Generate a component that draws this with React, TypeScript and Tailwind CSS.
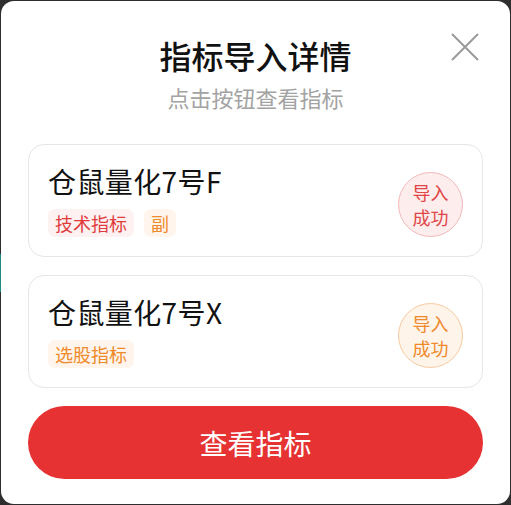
import React from "react";

const font = { fontFamily: '"Noto Sans CJK SC", "Noto Sans", sans-serif' };

type Tag = { text: string; tone: "red" | "orange" };

function Card({ title, tags, tone }: { title: string; tags: Tag[]; tone: "red" | "orange" }) {
  return (
    <div className="flex items-end justify-between rounded-[16px] border border-[#e6e6e6] bg-white pl-[19px] pr-[19px] pt-[19px] pb-[19px]">
      <div className="flex flex-col gap-[11px]">
        <div className="text-[28px] leading-[34px] tracking-[0.4px] text-[#111111]">{title}</div>
        <div className="flex gap-[10px]">
          {tags.map((t) => (
            <span
              key={t.text}
              className={
                t.tone === "red"
                  ? "h-[28px] rounded-[7px] bg-[#fdf1f1] px-[7px] text-[18px] leading-[28px] text-[#e03c3c]"
                  : "h-[28px] rounded-[7px] bg-[#fff5ec] px-[7px] text-[18px] leading-[28px] text-[#ef8a2a]"
              }
            >
              {t.text}
            </span>
          ))}
        </div>
      </div>
      <div
        className={
          tone === "red"
            ? "flex h-[65px] w-[65px] flex-col items-center justify-center rounded-full border border-[#f2b9b9] bg-[#fdeded] text-[18px] leading-[25px] text-[#e04646]"
            : "flex h-[65px] w-[65px] flex-col items-center justify-center rounded-full border border-[#f6caa0] bg-[#fff4ea] text-[18px] leading-[25px] text-[#ee8a2c]"
        }
      >
        <span>导入</span>
        <span>成功</span>
      </div>
    </div>
  );
}

export default function App() {
  return (
    <div className="relative h-[505px] w-[511px] bg-[#2e2e2e] p-[1px]" style={font}>
      <div className="absolute left-0 top-[254px] h-[38px] w-[1px] bg-[#1f8a86]" />
      <div className="relative flex h-full flex-col rounded-[13px] bg-white px-[27px] pt-[34px]">
        <button className="absolute right-[31px] top-[32px] h-[28px] w-[28px] text-[#9a9a9a]">
          <svg viewBox="0 0 28 28" width="28" height="28" fill="none" stroke="currentColor" strokeWidth="2">
            <path d="M1 1 L27 27 M27 1 L1 27" />
          </svg>
        </button>
        <div className="text-center text-[32px] font-medium leading-[40px] text-[#111111]">指标导入详情</div>
        <div className="mt-[7px] text-center text-[22px] leading-[30px] text-[#a3a3a3]">点击按钮查看指标</div>
        <div className="mt-[32px] flex flex-col gap-[18px]">
          <Card
            title="仓鼠量化7号F"
            tone="red"
            tags={[
              { text: "技术指标", tone: "red" },
              { text: "副", tone: "orange" },
            ]}
          />
          <Card title="仓鼠量化7号X" tone="orange" tags={[{ text: "选股指标", tone: "orange" }]} />
        </div>
        <button className="mt-[18px] h-[73px] w-full rounded-full bg-[#e63232] text-[28px] text-white">
          查看指标
        </button>
      </div>
    </div>
  );
}
